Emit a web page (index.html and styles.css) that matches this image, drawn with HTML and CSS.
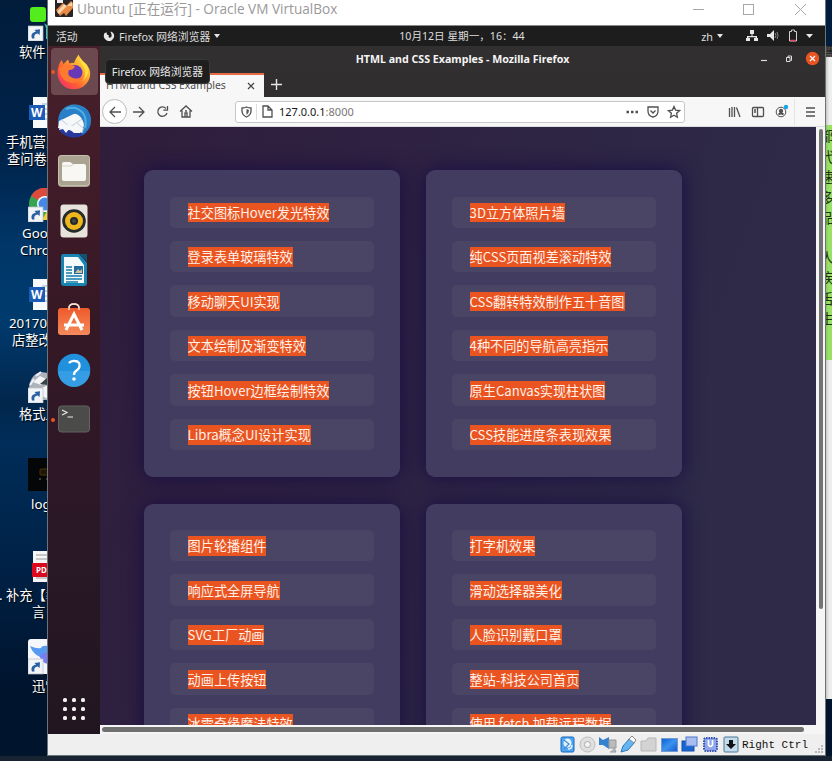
FILE: index.html
```html
<!DOCTYPE html>
<html lang="zh-CN">
<head>
<meta charset="utf-8">
<title>Ubuntu - Oracle VM VirtualBox</title>
<link rel="stylesheet" href="styles.css">
</head>
<body>
<svg width="0" height="0" class="defs">
  <defs>
    <linearGradient id="fox" x1="1" y1="0" x2="0" y2="1"><stop offset="0" stop-color="#fff44f"/><stop offset=".35" stop-color="#ffb02e"/><stop offset=".65" stop-color="#ff5a35"/><stop offset="1" stop-color="#f0257d"/></linearGradient>
    <linearGradient id="bird" x1="0" y1="0" x2="0" y2="1"><stop offset="0" stop-color="#2da1dc"/><stop offset="1" stop-color="#243a9b"/></linearGradient>
    <linearGradient id="bag" x1="0" y1="0" x2="0" y2="1"><stop offset="0" stop-color="#ee5a2b"/><stop offset="1" stop-color="#f58a5c"/></linearGradient>
    <linearGradient id="blue" x1="0" y1="0" x2="1" y2="1"><stop offset="0" stop-color="#0d5fd0"/><stop offset=".5" stop-color="#3b92ee"/><stop offset="1" stop-color="#1458d0"/></linearGradient>
    <g id="shortcut"><rect width="15" height="15" fill="#f2f4f6" stroke="#b7bec6" stroke-width=".7"/><path d="M4 12.500C2.500 8.500 4.500 6 8 5.700L6.500 4 12 3.200 11.600 8.900 9.800 7.400C6.800 7.900 5.700 9.500 6.500 12.500Z" fill="#285fa5"/></g>
    <g id="word"><rect x="5" width="18" height="31" fill="#f7f9fb"/><path d="M14 7h9M14 12h9M14 17h9M14 22h9" stroke="#8faed3"/><rect x="1" y="8" width="16" height="15" fill="#1d5cb6"/><text x="3" y="20" class="word-letter">W</text></g>
  </defs>
</svg>
<div class="desktop">
  <div class="shortcut s1"><svg class="ico" width="20" height="34"><rect x="2" width="16" height="15" rx="3" fill="#53ec1c"/><path d="M15 13q1 5 5 5v14h-2V21z" fill="#35c5b5"/><use href="#shortcut" y="19"/></svg><span class="l1">软件目录</span></div>
  <div class="shortcut s2"><svg class="ico" width="20" height="32"><use href="#word"/></svg><span class="l2">手机营业</span><span class="l3">查问卷-</span></div>
  <div class="shortcut s3"><svg class="ico" width="20" height="34"><circle cx="17" cy="16" r="16" fill="#35a551"/><path d="M3 8A16 16 0 0 1 33 16H17Z" fill="#dd4a3e"/><circle cx="17" cy="16" r="8" fill="#fff"/><circle cx="17" cy="16" r="6.500" fill="#4588e8"/><path d="M20 21l-6 11h6z" fill="#f7cb36"/><use href="#shortcut" y="19"/></svg><span class="l4">Google</span><span class="l5">Chrome</span></div>
  <div class="shortcut s4"><svg class="ico" width="20" height="32"><use href="#word"/></svg><span class="l6">201701</span><span class="l7">店整改</span></div>
  <div class="shortcut s5"><svg class="ico" width="20" height="32"><path d="M1 18C1 9 6 2 13 1l7 1v27H8L1 22Z" fill="#aeb3ba"/><path d="M5 11l7-6 6 3-5 6zM14 17l6-3v14l-6-3z" fill="#f4f4f6"/><path d="M12 13l8-7v8z" fill="#3c4249"/><path d="M2 14l4-6M8 5l5-4" stroke="#eef" stroke-width="2"/><use href="#shortcut" y="17"/></svg><span class="l1">格式工厂</span></div>
  <div class="shortcut s6"><svg class="ico" width="20" height="34"><rect width="20" height="33" fill="#050607"/><rect x="12" y="11" width="8" height="6" rx="1" fill="#201607" stroke="#4c3308"/><path d="M11 21h2M18 21h2" stroke="#777"/></svg><span class="l8">logo</span></div>
  <div class="shortcut s7"><svg class="ico" width="20" height="31"><rect x="5" width="16" height="31" fill="#f6f6f6"/><path d="M8 4h12M8 8h12M8 27h12" stroke="#999"/><rect x="4" y="12" width="17" height="14" fill="#dc081e"/><text x="8" y="22" class="pdf">PDF</text></svg><span class="l9">. 补充【教</span><span class="l10">言</span></div>
  <div class="shortcut s8"><svg class="ico" width="20" height="36"><rect width="30" height="35" rx="3" fill="#f5f7fc"/><path d="M2 7q7 3 11 2 1-3 7-2v17q-7-1-8-6-7-3-10-11" fill="#579af2"/><path d="M12 17q3-4 8-3v11q-6-1-8-8" fill="#7a7df0"/><use href="#shortcut" y="20"/></svg><span class="l10">迅雷</span></div>

  <div class="side-doc"><div class="side-top">黑</div><div class="green-note"><span>都</span><span>代</span><span>速</span><span>多</span><span>品</span><span class="note-gap">人</span><span>疾</span><span>舌</span><span>生</span></div></div>
  <div class="taskbar"></div>

  <section class="vm">
    <header class="vm-title">
      <svg class="vb-logo" width="18" height="19"><rect width="18" height="18" rx="1" fill="#292326"/><rect x="2" width="6" height="4" fill="#eee"/><path d="M1 11l7-7 3 3 5-5 2 2v5l-7 8-2-3-4 3z" fill="#e88944"/><path d="M2 13l7-8 3 2-8 8zM12 7l5-4v4z" fill="#f5d3ac"/></svg>
      <h1>Ubuntu [正在运行] - Oracle VM VirtualBox</h1>
      <svg class="vm-controls" width="118" height="16" fill="none" stroke="#a7a7a7"><path d="M0 8.500h11"/><rect x="50.500" y="3.500" width="10" height="10"/><path d="M102 3l11 11M113 3l-11 11"/></svg>
    </header>
    <div class="guest">
      <div class="gnome-bar">
        <span class="activities">活动</span>
        <svg class="app-symbol" width="12" height="12"><path d="M4.500 1C3.500 2 3.500 3 4 4.500L6 5.500Q5 7 6.500 7.800 9 7.500 8.600 5 8.400 3 7.300 1.500 11 2 11.200 6A5.200 5.200 0 1 1 2 2.500L3 3Z" fill="#e8e8e8"/></svg>
        <span class="app-menu">Firefox 网络浏览器</span><i class="caret"></i>
        <span class="clock">10月12日 星期一，16：44</span>
        <span class="lang">zh</span><i class="caret"></i>
        <svg class="tray" width="68" height="14" fill="#e8e8e8"><path d="M4 1h4v4H6.500v2H11v2h1v3H8V9h1.500v-.8h-7V9H4v3H0V9h1V7h4.500V5H4z"/><path d="M21 5h3l4-4v11l-4-4h-3z"/><path d="M29 4q2 2.500 0 5M31 3q2 3.500 0 7" fill="none" stroke="#888"/><path d="M43.500 2.500h2V1h3v1.500h2v9.500h-7z" fill="none" stroke="#d0d0d0"/><path d="M44 11.500h6" stroke="#df4969" stroke-width="1.500"/><path d="M60 5h7l-3.500 4z"/></svg>
      </div>
      <div class="guest-main">
        <nav class="dock">
          <div class="tile active"><i class="dot"></i><svg width="36" height="36" viewBox="0 0 36 36"><path d="M18 9C19 6 21 3 22.500 0.500c1 4 4 6 7 9 5 5 6 11 3 17A16.500 16.500 0 0 1 3 26C0 18 2 11 5.500 6l2 4L12 5.500l1.500 4q2.500-1 4.500-.5z" fill="url(#fox)"/><circle cx="19" cy="18.500" r="7.500" fill="#6839b7"/><path d="M3 14q6-4 11-3l5 1q-1 4-6 4-3 5 4 8 7 2 11-4-1 9-12 9Q4 27 3 14" fill="#ff7a30"/><path d="M23 2q1 7 5 11 3 7-1 14 8-8 4-16-5-4-8-9" fill="#ffde3d"/></svg></div>
          <div class="tile"><svg width="36" height="36" viewBox="0 0 36 36"><circle cx="18.500" cy="18" r="16.500" fill="url(#bird)"/><path d="M3 18L22 9 29 18 26 30 2 25Z" fill="#f5f7f9"/><path d="M5 16.500l9 7.500 12-8M26 30l2-4-7-6" fill="none" stroke="#c3cedb"/><path d="M4 12Q9 1 21 2q14 2 14 16-1 9-9 14 4-9 0-16Q21 8 12 12q-5 2-8 5z" fill="#2a7fc8"/><path d="M10 6q10-4 17 4 4 6 2 15" fill="none" stroke="#4db0e4" stroke-width="2"/><path d="M2 25l10 2 14 3q-5 5-12 4Q5 32 2 25z" fill="#27399a"/><path d="M4 23l-1 4 4-1 3 4 3-4 5 4 6 0 1-4-12-4z" fill="#f5f7f9"/></svg></div>
          <div class="tile"><svg width="34" height="34" viewBox="0 0 34 34"><rect x="1" y="1" width="32" height="32" rx="4" fill="#aaa391"/><rect x="1.500" y="1.500" width="31" height="30" rx="3" fill="none" stroke="#c7bfae"/><path d="M5 10q0-2 2-2h6l3 2h11q2 0 2 2v13q0 2-2 2H7q-2 0-2-2z" fill="#f8f7f3"/><path d="M5 12h9l3-2" fill="none" stroke="#d5d0c6"/></svg></div>
          <div class="tile"><svg width="34" height="34" viewBox="0 0 34 34"><rect x="3.500" y="0.500" width="27" height="33" rx="3" fill="#e7e2dc"/><circle cx="17" cy="17" r="11.800" fill="#252a2b"/><circle cx="17" cy="17" r="9" fill="#efb71e"/><circle cx="17" cy="17" r="4" fill="#22292b"/><circle cx="17" cy="17" r="2" fill="#424846"/></svg></div>
          <div class="tile"><svg width="34" height="34" viewBox="0 0 34 34"><path d="M6 1h16l8 9v20q0 3-3 3H7q-3 0-3-3V4q0-3 2-3z" fill="#1784b2"/><path d="M7 4h14l6 8v18H7z" fill="#f4fafc"/><path d="M22 1h8v8z" fill="#125373"/><path d="M9 14h6M9 17h6M9 20h6M9 23h16M9 26h16M9 29h12" stroke="#147ba8" stroke-width="1.300"/><rect x="17" y="13" width="9" height="8" fill="#236b9d"/><path d="M18 20l3-4 2 2 2-2v4z" fill="#d3c09b"/></svg></div>
          <div class="tile"><svg width="34" height="34" viewBox="0 0 34 34"><path d="M12 8V5q0-4 5-4t5 4v3" fill="none" stroke="#ead8ca" stroke-width="1.500"/><rect x="1" y="5" width="32" height="27" rx="3" fill="url(#bag)"/><path d="M12 7V5q0-4 5-4t5 4v2" fill="none" stroke="#f8dfcf" stroke-width="1.400"/><path d="M9 27l8-16 8 16M7 22h20" fill="none" stroke="#fff" stroke-width="3"/></svg></div>
          <div class="tile"><svg width="34" height="34" viewBox="0 0 34 34"><circle cx="17" cy="17" r="16.300" fill="#2191dd"/><path d="M1 18a16 16 0 0 0 32 0z" fill="#359de3"/><path d="M12 10q2-2.500 6-2 5 .5 4.500 5 0 2.500-3 4.500-2.500 1.500-2.500 4.500" fill="none" stroke="#fff" stroke-width="2.300"/><circle cx="17" cy="26" r="1.800" fill="#fff"/></svg></div>
          <div class="tile"><i class="dot"></i><svg width="34" height="34" viewBox="0 0 34 34"><rect x="1.500" y="4" width="31" height="26" rx="3" fill="#4b4c4a" stroke="#636361"/><path d="M5 8l5 2.500-5 2.500M10.500 15H16" fill="none" stroke="#e7e7e7" stroke-width="1.200"/></svg></div>
          <div class="apps"><i></i><i></i><i></i><i></i><i></i><i></i><i></i><i></i><i></i></div>
        </nav>
        <main class="browser">
          <div class="ff-title"><strong>HTML and CSS Examples - Mozilla Firefox</strong>
            <svg class="ff-controls" width="66" height="16"><path d="M8 9.500h6" stroke="#ddd" stroke-width="1.200"/><path d="M33.500 6.500h3.500v4h-3.500zM35 6V5h3.500v4.500h-1" fill="none" stroke="#ddd"/><circle cx="59.500" cy="7.500" r="6.700" fill="#e95420"/><path d="M57 5l5 5M62 5l-5 5" stroke="#fff" stroke-width="1.200"/></svg>
          </div>
          <div class="tabs"><div class="tab"><span>HTML and CSS Examples</span><svg width="8" height="8"><path d="M1 1l6 6M7 1L1 7" stroke="#444" stroke-width="1.200"/></svg></div><svg class="new-tab" width="11" height="11"><path d="M5.500 0v11M0 5.500h11" stroke="#e6e6e6" stroke-width="1.400"/></svg></div>
          <div class="toolbar">
            <span class="back"><svg width="14" height="12" class="line"><path d="M13 6H2M7 1L2 6l5 5"/></svg></span>
            <svg width="14" height="12" class="line fwd"><path d="M1 6h11M7 1l5 5-5 5"/></svg>
            <svg width="13" height="13" class="line reload"><path d="M10 3.500A4.700 4.700 0 1 0 11 8M11.500 1v4.200H7.300"/></svg>
            <svg width="14" height="13" class="line home"><path d="M1 6.500L7 1l6 5.500M3 5.500V12h8V5.500M6 12V8h2v4M6 6h2"/></svg>
            <div class="urlbar">
              <svg width="11" height="12" class="line shield"><path d="M1 2q2.500 0 4.500-1Q8 2 10 2v3q0 4-4.500 6Q1 9 1 5z"/><path d="M5.500 3v6Q8 7.500 8 4z" fill="#555" stroke="none"/></svg><i class="url-sep"></i>
              <svg width="11" height="13" class="line"><path d="M1 1h5l4 4v7H1zM6 1v4h4"/></svg>
              <span class="url">127.0.0.1<em>:8000</em></span>
              <svg width="56" height="14" class="line url-actions"><path d="M1.500 7H4M6 7h2.500M10.500 7H13" stroke-width="2.400"/><path d="M23 2h10v4q0 5-5 6-5-1-5-6zM25.500 5.500l2.500 2.500 2.500-2.500"/><path d="M49 1.500l1.600 3.600 4 .5-3 2.700.8 4-3.400-2-3.400 2 .8-4-3-2.700 4-.5z"/></svg>
            </div>
            <svg width="90" height="16" class="line actions"><path d="M2.500 4v9M5 3v10M7.500 3v10M9.500 3.500l3.500 9.500"/><rect x="25.500" y="3.500" width="11" height="9" rx="1"/><path d="M30.500 4v8M27 6h2M27 8h2"/><circle cx="54" cy="8" r="4.800" stroke-width="1"/><circle cx="54" cy="7" r="1.500" fill="#555"/><path d="M51.500 10.500q2.500-2 5 0" stroke-width="1.700"/><circle cx="59" cy="3" r="2.200" fill="#16a5ed" stroke="none"/><path d="M67.500-5v26" stroke="#e4e4e4" stroke-width="1"/><path d="M79 4h9M79 8h9M79 12h9"/></svg>
          </div>
          <div class="viewport">
            <div class="page">
              <ul class="card"><li><a>社交图标Hover发光特效</a></li><li><a>登录表单玻璃特效</a></li><li><a>移动聊天UI实现</a></li><li><a>文本绘制及渐变特效</a></li><li><a>按钮Hover边框绘制特效</a></li><li><a>Libra概念UI设计实现</a></li></ul>
              <ul class="card"><li><a>3D立方体照片墙</a></li><li><a>纯CSS页面视差滚动特效</a></li><li><a>CSS翻转特效制作五十音图</a></li><li><a>4种不同的导航高亮指示</a></li><li><a>原生Canvas实现柱状图</a></li><li><a>CSS技能进度条表现效果</a></li></ul>
              <ul class="card"><li><a>图片轮播组件</a></li><li><a>响应式全屏导航</a></li><li><a>SVG工厂动画</a></li><li><a>动画上传按钮</a></li><li><a>冰雪奇缘魔法特效</a></li><li></li></ul>
              <ul class="card"><li><a>打字机效果</a></li><li><a>滑动选择器美化</a></li><li><a>人脸识别戴口罩</a></li><li><a>整站-科技公司首页</a></li><li><a>使用 fetch 加载远程数据</a></li><li></li></ul>
            </div>
            <div class="vscroll"><i></i></div>
            <div class="hscroll"><i></i></div>
          </div>
        </main>
      </div>
      <div class="tooltip">Firefox 网络浏览器</div>
    </div>
    <footer class="vm-status">
      <svg width="180" height="18">
        <rect x="1" y="1" width="13" height="15" rx="1.500" fill="#4fa5ee" stroke="#1366bf"/><ellipse cx="7.500" cy="7" rx="4" ry="4.500" fill="#e4f2fd"/><path d="M4 4l5 4-5 5" stroke="#3c8ad8" stroke-width="1.200" fill="none"/><path d="M8 13q4 0 4-4" stroke="#e4f2fd" stroke-width="1.500" fill="none"/>
        <circle cx="27.500" cy="8.500" r="7.500" fill="#e0e0e0" stroke="#bdbdbd"/><circle cx="27.500" cy="8.500" r="3" fill="#f5f5f5" stroke="#aaa"/>
        <path d="M39 1l4 3 6-3v12l-6-4h-4z" fill="#3582ce"/><path d="M49 4h7v8h-7zM50 16h6l-2-4" fill="#bbb" stroke="#999"/>
        <path d="M61 16l2-6 7-8 5 4-7 8z" fill="#67b4ef" stroke="#2879bb"/><path d="M69 3l3-3 4 4-2 3z" fill="#fff" stroke="#888"/>
        <path d="M81 5h5l2-3h8v13H81z" fill="#d3d3d3" stroke="#b7b7b7"/>
        <rect x="101.500" y="2.500" width="16" height="13" fill="url(#blue)" stroke="#7699ce"/>
        <rect x="122" y="5" width="12" height="10" fill="#1767d2" stroke="#164fac"/><rect x="126" y="1" width="11" height="9" fill="#a9bdf1" stroke="#4e77cd"/>
        <rect x="144" y="2" width="13" height="13" rx="2" fill="#8fa8ed" stroke="#354fae" stroke-width="2" stroke-dasharray="1.500 1"/><path d="M148.500 4v5q2 3 4 0V4" fill="none" stroke="#fff" stroke-width="1.600"/>
        <rect x="164" y="1" width="14" height="15" rx="1" fill="#c4dbec" stroke="#487895"/><path d="M169 4h4v4h3l-5 5-5-5h3z" fill="#101214"/>
      </svg>
      <span>Right Ctrl</span>
      <svg class="grip" width="9" height="9" fill="#b8b8b8"><path d="M6 0h2v2H6zM3 3h2v2H3zM6 3h2v2H6zM0 6h2v2H0zM3 6h2v2H3zM6 6h2v2H6z"/></svg>
    </footer>
  </section>
</div>
</body>
</html>
```

FILE: styles.css
```css
* { box-sizing: border-box; }
body { margin: 0; overflow: hidden; font-family: "Noto Sans", "Noto Sans CJK SC", sans-serif; }
svg { display: block; flex: none; }
.defs { position: absolute; }
.desktop { position: relative; width: 832px; height: 761px; overflow: hidden; background: linear-gradient(180deg, #011c3b 0, #00234a 20%, #003668 32%, #003b6e 42%, #02264c 53%, #002d59 58%, #002349 72%, #00142e 90%, #00142c 100%); }

/* desktop shortcuts */
.shortcut { position: absolute; left: 0; width: 90px; display: flex; flex-direction: column; color: #fff; font: 13.300px/17px "Noto Sans", "Noto Sans CJK SC", sans-serif; white-space: pre; text-shadow: 1px 1px 1px #000; }
.ico { margin-left: 28px; margin-bottom: 3px; }
.word-letter { font: bold 12px "Noto Sans", sans-serif; fill: #fff; text-shadow: none; }
.pdf { font: bold 8px "Noto Sans", sans-serif; fill: #fff; text-shadow: none; }
.s1 { top: 7px; } .s2 { top: 97px; } .s3 { top: 188px; } .s4 { top: 279px; }
.s5 { top: 371px; } .s6 { top: 458px; } .s7 { top: 551px; } .s8 { top: 639px; }
.l1 { margin-left: 19px; } .l2 { margin-left: 6px; margin-top: 2px; } .l3 { margin-left: 7px; }
.l4 { margin-left: 22px; } .l5 { margin-left: 20px; } .l6 { margin-left: 9px; margin-top: 1px; } .l7 { margin-left: 12px; }
.l8 { margin-left: 31px; margin-top: 1px; } .l9 { margin-left: -1px; margin-top: 2px; } .l10 { margin-left: 32px; }

.side-doc { position: absolute; left: 825px; top: 46px; width: 7px; height: 653px; background: linear-gradient(90deg, #bbb, #eee 60%); overflow: hidden; }
.side-top { height: 79px; font-size: 11px; line-height: 12px; color: #222; background: linear-gradient(#555 0 11px, transparent 11px); }
.green-note { height: 235px; background: linear-gradient(90deg, #82bd5e, #98e165 50%); font: 14px/20.500px "Noto Sans CJK SC", sans-serif; color: #1d3210; display: flex; flex-direction: column; }
.green-note span { margin-left: -5px; }
.green-note .note-gap { margin-top: 19px; }
.taskbar { position: absolute; left: 0; top: 756px; width: 832px; height: 5px; background: #172330; }

/* virtual machine window */
.vm { position: absolute; left: 47px; top: 0; width: 779px; height: 756px; display: flex; flex-direction: column; background: #efefef; border: solid #6d7478; border-width: 0 1px 1px; }
.vm-title { height: 25px; flex: none; display: flex; align-items: flex-start; background: #fff; padding: 0 14px 0 7px; }
.vb-logo { margin-top: -1px; }
.vm-title h1 { margin: -2px 0 0 4px; font: 400 13.600px/22px "Open Sans", "Noto Sans CJK SC", sans-serif; color: #999; white-space: nowrap; }
.vm-controls { margin: 1px 0 0 auto; }
.guest { position: relative; height: 709px; flex: none; display: flex; flex-direction: column; border-top: 1px solid #888; }
.gnome-bar { height: 20px; flex: none; display: flex; align-items: center; background: #1d1d1d; color: #dedede; font-size: 10.800px; line-height: 19px; white-space: nowrap; }
.activities { margin-left: 8px; width: 47px; }
.app-symbol { margin-right: 4px; }
.caret { border: 3.500px solid transparent; border-top: 4px solid #e6e6e6; border-bottom: 0; margin-left: 4px; }
.clock { margin-left: 179px; width: 302px; font-size: 10.600px; }
.lang { width: 12px; }
.tray { margin-left: 23px; }
.guest-main { flex: 1; min-height: 0; display: flex; }
.dock { width: 52px; flex: none; display: flex; flex-direction: column; align-items: center; padding-top: 2px; background: linear-gradient(#48202b, #371825 38%, #2b1827 68%, #21161f); }
.tile { position: relative; width: 47px; height: 47px; margin-bottom: 2.700px; flex: none; display: flex; align-items: center; justify-content: center; }
.active { background: #6b494f; border-radius: 4px; }
.dot { position: absolute; left: 0; top: 22px; width: 4px; height: 4px; border-radius: 50%; background: #e95420; }
.apps { margin-top: auto; margin-bottom: 14px; display: grid; grid-template-columns: repeat(3, 4.500px); gap: 4.300px; }
.apps i { height: 4.500px; border-radius: 1.500px; background: #f3efef; }
.browser { flex: 1; min-width: 0; display: flex; flex-direction: column; }
.ff-title { position: relative; height: 27px; flex: none; display: flex; align-items: center; justify-content: center; background: #312f2f; color: #f5f5f5; font-size: 10.650px; padding-bottom: 1px; }
.ff-controls { position: absolute; right: 6px; top: 5px; }
.tabs { height: 24px; flex: none; display: flex; background: #302e2f; }
.tab { width: 164px; display: flex; align-items: center; justify-content: space-between; padding: 0 9px 0 6px; border-top: 2px solid #e66b45; background: #f7f7f7; color: #4d4d4d; font-size: 10.400px; white-space: nowrap; }
.tab span { margin-top: -2px; }
.new-tab { margin: 6px 0 0 7px; }
.toolbar { height: 30px; flex: none; display: flex; align-items: center; background: #f7f7f8; border-bottom: 1px solid #ddd; }
.line { fill: none; stroke: #505052; stroke-width: 1.300; }
.back { width: 25px; height: 25px; margin-left: 2px; border: 1px solid #bbb; border-radius: 50%; background: #fff; display: flex; align-items: center; justify-content: center; }
.fwd { margin-left: 5px; } .reload { margin-left: 10px; } .home { margin-left: 10px; }
.urlbar { width: 450px; height: 22px; margin-left: 42px; padding: 0 5px; display: flex; align-items: center; border: 1px solid #c7c7c7; border-radius: 3px; background: #fff; }
.url-sep { width: 1px; height: 16px; background: #ddd; margin: 0 5px 0 4px; }
.url { margin-left: 6px; font-size: 11px; color: #151515; }
.url em { font-style: normal; color: #777; }
.url-actions { margin-left: auto; margin-right: -2px; }
.actions { margin-left: 42px; overflow: visible; }
.viewport { flex: 1; min-height: 0; display: grid; grid-template: minmax(0, 1fr) 9px / minmax(0, 1fr) 9px; background: #f5f5f5; }
.page { overflow: hidden; padding: 43px 44px; display: grid; grid-template-columns: 256px 256px; grid-auto-rows: 307px; gap: 26.500px 26px; align-content: start; background: linear-gradient(110deg, #301c3b 0, #2e2343 40%, #2e2a48 75%, #2e2a48 100%); }
.card { margin: 0; padding: 26.500px 26.500px 26px 26px; list-style: none; display: flex; flex-direction: column; gap: 13.300px; background: #423d60; border-radius: 9px; box-shadow: 0 0 20px #170d42; }
.card li { height: 31.200px; flex: none; display: flex; align-items: center; padding: 1px 0 0 17.600px; border-radius: 5px; background: #4a4564; }
.card a { font: 13.150px/19.500px "Noto Sans CJK SC", sans-serif; color: #fff0e8; background: #e95420; white-space: nowrap; }
.vscroll { padding: 2px 1px 0 3px; }
.vscroll i { display: block; width: 4px; height: 480px; border-radius: 2px; background: #737373; }
.hscroll { grid-column: 1 / -1; padding: 2px 0 0 2px; }
.hscroll i { display: block; width: 702px; height: 5px; border-radius: 3px; background: #707070; }
.tooltip { position: absolute; left: 57px; top: 33px; width: 105px; height: 25px; border-radius: 4px; border: 1px solid #383838; background: #1e1e1e; color: #e7e7e7; font-size: 10.800px; line-height: 23px; text-align: center; white-space: nowrap; }
.vm-status { flex: 1; display: flex; align-items: center; justify-content: flex-end; }
.vm-status span { margin-left: 2px; font: 11px/18px "Liberation Mono", monospace; color: #111; }
.grip { margin: 9px 1px 0 7px; }
```
